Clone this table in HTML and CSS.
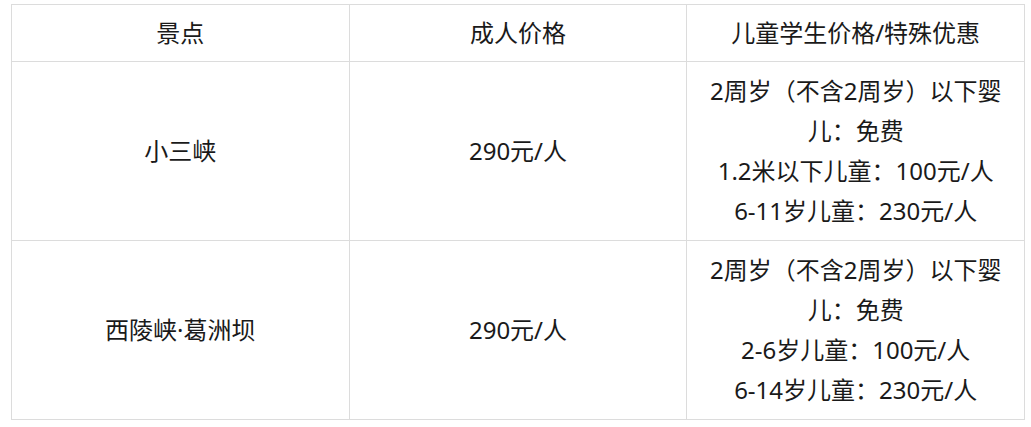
FILE: index.html
```html
<!DOCTYPE html>
<html lang="zh-CN">
<head>
<meta charset="utf-8">
<title>景点价格</title>
<link rel="stylesheet" href="styles.css">
</head>
<body>
<div class="page">
<table class="price-table">
  <colgroup><col class="c"><col class="c"><col class="c"></colgroup>
  <thead>
    <tr><th>景点</th><th>成人价格</th><th>儿童学生价格/特殊优惠</th></tr>
  </thead>
  <tbody>
    <tr>
      <td>小三峡</td>
      <td>290元/人</td>
      <td>2周岁（不含2周岁）以下婴儿：免费<br>1.2米以下儿童：100元/人<br>6-11岁儿童：230元/人</td>
    </tr>
    <tr>
      <td>西陵峡·葛洲坝</td>
      <td>290元/人</td>
      <td>2周岁（不含2周岁）以下婴儿：免费<br>2-6岁儿童：100元/人<br>6-14岁儿童：230元/人</td>
    </tr>
  </tbody>
</table>
</div>
</body>
</html>
```

FILE: styles.css
```css
html, body {
  margin: 0;
  padding: 0;
  background: #fff;
}
.page {
  padding: 4px 0 0 11px;
}
.price-table {
  border-collapse: collapse;
  table-layout: fixed;
  width: 1014px;
  font-family: "Noto Sans", "Noto Sans CJK SC", sans-serif;
  font-size: 24px;
  color: #1a1a1a;
}
.price-table th,
.price-table td {
  border: 1px solid #dcdcdc;
  text-align: center;
  vertical-align: middle;
  font-weight: normal;
  padding: 8px 16px;
  line-height: 40px;
}
.price-table td {
  padding: 9px 16px;
}
```
